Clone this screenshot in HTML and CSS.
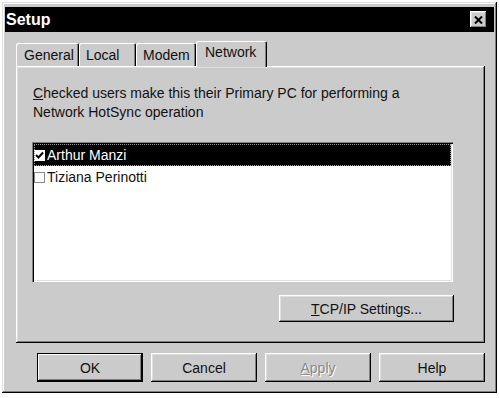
FILE: index.html
```html
<!DOCTYPE html>
<html lang="en">
<head>
  <meta charset="UTF-8">
  <meta name="viewport" content="width=device-width, initial-scale=1.0">
  <title>Setup</title>
  <link rel="stylesheet" href="styles.css">
</head>
<body>
  <div class="window">
    <div class="titlebar">
      <span class="title">Setup</span>
      <button class="close-btn" aria-label="Close">
        <svg width="9" height="8" viewBox="0 0 9 8"><path d="M1 0.5 L8 7.5 M8 0.5 L1 7.5" stroke="#000" stroke-width="2" fill="none"/></svg>
      </button>
    </div>

    <div class="tabs">
      <div class="tab tab-general">General</div>
      <div class="tab tab-local">Local</div>
      <div class="tab tab-modem">Modem</div>
      <div class="tab tab-network active">Network</div>
    </div>

    <div class="panel">
      <p class="intro"><u>C</u>hecked users make this their Primary PC for performing a<br>Network HotSync operation</p>

      <ul class="user-list">
        <li class="selected">
          <span class="check">
            <svg width="9" height="9" viewBox="0 0 9 9"><path d="M1 4 L3.5 6.5 L8 1.5" stroke="#000" stroke-width="2" fill="none"/></svg>
          </span>Arthur Manzi
        </li>
        <li><span class="check"></span>Tiziana Perinotti</li>
      </ul>

      <div class="panel-actions">
        <button class="btn btn-wide"><u>T</u>CP/IP Settings...</button>
      </div>
    </div>

    <div class="dialog-buttons">
      <button class="btn btn-default">OK</button>
      <button class="btn">Cancel</button>
      <button class="btn" disabled><u>A</u>pply</button>
      <button class="btn">Help</button>
    </div>
  </div>
</body>
</html>
```

FILE: styles.css
```css
body {
  margin: 0;
  background: #fff;
  font-family: "Liberation Sans", Arial, sans-serif;
  font-size: 14px;
  color: #111;
}
.window {
  margin: 2px;
  height: 391px;
  box-sizing: border-box;
  padding: 4px 3px 3px;
  background: #cbcbcb;
  box-shadow: inset -1px -1px #000, inset 1px 1px #dfdfdf, inset -2px -2px #808080, inset 2px 2px #fff;
}
.titlebar {
  height: 25px;
  margin-top: 1px;
  background: #000;
  color: #fff;
  display: flex;
  align-items: center;
  justify-content: space-between;
  padding: 0 7px 0 1px;
}
.title {
  font-weight: bold;
  font-size: 16px;
}
.close-btn {
  width: 17px;
  height: 17px;
  padding: 0;
  border: none;
  background: #cbcbcb;
  display: flex;
  align-items: center;
  justify-content: center;
  box-shadow: inset -1px -1px #000, inset 1px 1px #fff, inset -2px -2px #808080, inset 2px 2px #dfdfdf;
}

/* onglets */
.tabs {
  display: flex;
  align-items: flex-end;
  height: 25px;
  margin: 9px 0 0 11px;
}
.tab {
  height: 23px;
  box-sizing: border-box;
  padding: 3px 0 0 8px;
  line-height: 18px;
  border-radius: 2px 2px 0 0;
  box-shadow: inset 1px 1px #fff, inset -1px 0 #000, inset -2px 0 #808080;
}
.tab-general { width: 63px; }
.tab-local { width: 57px; padding-left: 7px; }
.tab-modem { width: 60px; padding-left: 7px; }
.tab-network { width: 71px; padding-left: 9px; }
.tab.active {
  height: 26px;
  padding-top: 2px;
  margin-bottom: -1px;
  position: relative;
  z-index: 1;
  background: #cbcbcb;
}

.panel {
  height: 277px;
  box-sizing: border-box;
  margin: 0 9px 0 11px;
  padding: 18px 32px 0 16px;
  box-shadow: inset -1px -1px #000, inset 1px 1px #fff, inset -2px -2px #808080, inset 2px 2px #dfdfdf;
}
.intro {
  margin: 0 0 20px;
  padding-left: 1px;
  line-height: 19px;
}
.user-list {
  list-style: none;
  margin: 0;
  padding: 2px;
  height: 140px;
  box-sizing: border-box;
  background: #fff;
  box-shadow: inset 1px 1px #808080, inset 2px 2px #000, inset -1px -1px #fff, inset -2px -2px #dfdfdf;
}
.user-list li {
  height: 22px;
  display: flex;
  align-items: center;
  gap: 2px;
}
.user-list li.selected {
  background: #000;
  color: #fff;
  outline: 1px dotted #999;
  outline-offset: -1px;
}
.check {
  width: 11px;
  height: 11px;
  box-sizing: border-box;
  border: 1px solid #8a8a8a;
  background: #fff;
  display: flex;
  align-items: center;
  justify-content: center;
}
.selected .check {
  border-color: #fff;
}
.panel-actions {
  display: flex;
  justify-content: flex-end;
  margin-top: 13px;
  margin-right: -1px;
}

.btn {
  height: 29px;
  width: 106px;
  padding: 0;
  border: none;
  background: #cbcbcb;
  font-family: inherit;
  font-size: 14px;
  color: #111;
  box-shadow: inset -1px -1px #000, inset 1px 1px #fff, inset -2px -2px #808080, inset 2px 2px #dfdfdf;
}
.btn-wide {
  width: 175px;
  height: 27px;
}
.btn-default {
  box-shadow: inset 0 0 0 1px #000, inset -2px -2px #000, inset 2px 2px #fff, inset -3px -3px #808080;
}
.btn:disabled {
  color: #8a8a8a;
  text-shadow: 1px 1px #fff;
}
.dialog-buttons {
  display: flex;
  gap: 8px;
  margin: 10px 0 0 32px;
}
```
